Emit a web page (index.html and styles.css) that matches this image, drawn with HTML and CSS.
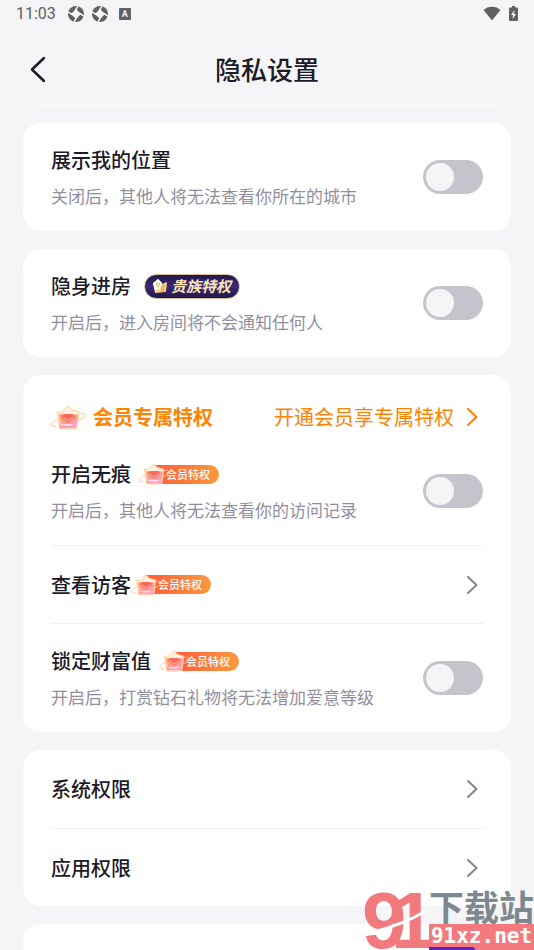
FILE: index.html
```html
<!DOCTYPE html>
<html lang="zh-CN">
<head>
  <meta charset="UTF-8" />
  <meta name="viewport" content="width=device-width, initial-scale=1.0" />
  <title>隐私设置</title>
  <link rel="stylesheet" href="styles.css">
</head>
<body>
  <!-- shared icons -->
  <svg class="sprite" aria-hidden="true">
    <defs>
      <linearGradient id="gemFill" x1="0" y1="0" x2="1" y2="1">
        <stop offset="0" stop-color="#ffa566" />
        <stop offset="0.5" stop-color="#ff9a90" />
        <stop offset="1" stop-color="#ff9fe0" />
      </linearGradient>
      <linearGradient id="goldFill" x1="0" y1="0" x2="1" y2="1">
        <stop offset="0" stop-color="#fff8e4" />
        <stop offset="1" stop-color="#f3bd55" />
      </linearGradient>
    </defs>
    <symbol id="icon-arrow" viewBox="0 0 22 22">
      <path d="M7 3l8.500 8L7 19" fill="none" stroke="currentColor" stroke-width="2" stroke-linecap="round" stroke-linejoin="round" />
    </symbol>
    <symbol id="icon-shutter" viewBox="0 0 16 16">
      <circle cx="8" cy="8" r="8" fill="#606060" />
      <path d="M8 3l5 5-5 5-5-5z" fill="#f5f5f8" />
      <path d="M0 6l5 3M6 16l3-5M16 10l-5-3M10 0L7 5" stroke="#f5f5f8" stroke-width="1.500" />
    </symbol>
    <symbol id="icon-gem" viewBox="0 0 35 25">
      <path d="M7 14C2 16 0 19 1 21q1 1 4 0M27 9c4-1 7-1 7 1 0 2-3 4-7 6" fill="none" stroke="#ffc996" stroke-width="1" />
      <path d="M6 7l5 0 6-6 4 4 7 2-2 16-4 1H9z" fill="#fff1dd" stroke="#ffcf95" stroke-width="1" />
      <path d="M7 10l3-1h13l4 1-2 13H9z" fill="url(#gemFill)" />
      <path d="M10 12l3-3h8l3 3-7 6z" fill="#f9685c" />
      <path d="M12 12l5 4 5-4" fill="none" stroke="#ffc2ac" stroke-width="1" />
      <path d="M7 10l3 10h13" fill="none" stroke="#ffe4d8" stroke-width="1" />
      <path d="M12 20h8" stroke="#ffd9ee" stroke-width="2" />
    </symbol>
  </svg>

  <div class="status-bar">
    <span class="time">11:03</span>
    <svg class="status-icon" viewBox="0 0 16 16" aria-hidden="true"><use href="#icon-shutter" /></svg>
    <svg class="status-icon" viewBox="0 0 16 16" aria-hidden="true"><use href="#icon-shutter" /></svg>
    <span class="input-mark">A</span>
    <svg class="wifi" viewBox="0 0 18 15" aria-hidden="true">
      <path d="M0.500 4C5-.5 13-.5 17.500 4L9 14.500z" fill="#606060" />
    </svg>
    <svg class="battery" viewBox="0 0 9 15" aria-hidden="true">
      <path d="M3 0h3v1.500h2q1 0 1 1V14q0 1-1 1H1q-1 0-1-1V2.500q0-1 1-1h2z" fill="#606060" />
      <path d="M5.500 4L2 9h2l-.5 4L7 8H5z" fill="#f5f5f8" />
    </svg>
  </div>

  <header class="nav">
    <button type="button" class="back" aria-label="返回">
      <svg viewBox="0 0 18 28" aria-hidden="true">
        <path d="M15 3L3 14.500 15 26" fill="none" stroke="currentColor" stroke-width="2.500" stroke-linecap="round" stroke-linejoin="round" />
      </svg>
    </button>
    <h1>隐私设置</h1>
  </header>

  <main>
    <section class="card">
      <div class="row">
        <div class="info">
          <label class="name" for="location">展示我的位置</label>
          <p>关闭后，其他人将无法查看你所在的城市</p>
        </div>
        <input type="checkbox" class="switch" id="location" />
      </div>
    </section>

    <section class="card">
      <div class="row">
        <div class="info">
          <div class="title">
            <label class="name" for="stealth">隐身进房</label>
            <span class="noble">
              <svg viewBox="0 0 16 16" aria-hidden="true">
                <path d="M1 5l2-1 3-3 3 3 1 2 5-2-1 10-11 1z" fill="url(#goldFill)" />
                <path d="M1 5l5-4 4 4-2 6-5 1z" fill="#fff" />
                <path d="M4 6l2-1 2 1-2 3zM10 7v7M12 6l-1 8" fill="none" stroke="#e5a84d" stroke-width="1" />
              </svg>
              贵族特权
            </span>
          </div>
          <p>开启后，进入房间将不会通知任何人</p>
        </div>
        <input type="checkbox" class="switch" id="stealth" />
      </div>
    </section>

    <section class="card">
      <div class="vip-head">
        <svg class="gem" viewBox="0 0 35 25" aria-hidden="true"><use href="#icon-gem" /></svg>
        <h2>会员专属特权</h2>
        <a href="#vip">开通会员享专属特权<svg class="arrow" aria-hidden="true"><use href="#icon-arrow" /></svg></a>
      </div>
      <div class="row">
        <div class="info">
          <div class="title">
            <label class="name" for="traceless">开启无痕</label>
            <span class="vip"><svg viewBox="0 0 35 25" aria-hidden="true"><use href="#icon-gem" /></svg><b>会员特权</b></span>
          </div>
          <p>开启后，其他人将无法查看你的访问记录</p>
        </div>
        <input type="checkbox" class="switch" id="traceless" />
      </div>
      <a class="row link" href="#visitors">
        <span class="title tight">
          <span class="name">查看访客</span>
          <span class="vip"><svg viewBox="0 0 35 25" aria-hidden="true"><use href="#icon-gem" /></svg><b>会员特权</b></span>
        </span>
        <svg class="arrow" aria-hidden="true"><use href="#icon-arrow" /></svg>
      </a>
      <div class="row">
        <div class="info">
          <div class="title">
            <label class="name" for="wealth">锁定财富值</label>
            <span class="vip"><svg viewBox="0 0 35 25" aria-hidden="true"><use href="#icon-gem" /></svg><b>会员特权</b></span>
          </div>
          <p>开启后，打赏钻石礼物将无法增加爱意等级</p>
        </div>
        <input type="checkbox" class="switch" id="wealth" />
      </div>
    </section>

    <section class="card">
      <a class="row link" href="#system">
        <span class="name">系统权限</span>
        <svg class="arrow" aria-hidden="true"><use href="#icon-arrow" /></svg>
      </a>
      <a class="row link" href="#app">
        <span class="name">应用权限</span>
        <svg class="arrow" aria-hidden="true"><use href="#icon-arrow" /></svg>
      </a>
    </section>

    <section class="card next"></section>
  </main>

  <div class="watermark">
    <svg class="mark" viewBox="0 0 62 60" aria-hidden="true">
      <text x="-2" y="58">9</text>
      <text x="27" y="58">1</text>
      <path d="M6 43Q38 35 62 21" />
    </svg>
    <div class="site">
      <span class="site-name">下载站</span>
      <span class="site-url">91xz.net</span>
    </div>
    <i class="tab"></i>
  </div>
</body>
</html>
```

FILE: styles.css
```css
* {
  box-sizing: border-box;
}
body {
  margin: 0;
  height: 100vh;
  overflow: hidden;
  position: relative;
  display: flex;
  flex-direction: column;
  background: #f5f5f8;
  color: #1d1b28;
  font-family: "Noto Sans CJK SC", sans-serif;
}
h1, h2, p {
  margin: 0;
}
a {
  color: inherit;
  text-decoration: none;
}
.sprite {
  position: absolute;
  width: 0;
  height: 0;
}

/* status bar */
.status-bar {
  display: flex;
  align-items: center;
  flex: none;
  gap: 8px;
  height: 27px;
  padding: 0 16px;
  color: #606060;
}
.time {
  margin-right: 4px;
  font: 16px/20px Roboto, sans-serif;
}
.status-icon {
  width: 16px;
  height: 16px;
}
.input-mark {
  width: 12px;
  height: 12px;
  margin-left: 3px;
  border-radius: 1px;
  background: #606060;
  color: #f5f5f8;
  font: bold 9px/12px Roboto, sans-serif;
  text-align: center;
}
.wifi {
  width: 18px;
  height: 15px;
  margin-left: auto;
}
.battery {
  width: 9px;
  height: 15px;
}

/* nav */
.nav {
  display: grid;
  grid-template-columns: 40px 1fr 40px;
  align-items: center;
  flex: none;
  height: 79px;
  margin: 0 37px 17px;
  padding-top: 6px;
  border-bottom: 1px solid #fcfcfd;
}
.nav h1 {
  font-size: 26px;
  font-weight: 500;
  line-height: 38px;
  text-align: center;
}
.back {
  height: 40px;
  margin-left: -8px;
  padding: 0;
  border: 0;
  background: none;
  color: inherit;
}
.back svg {
  display: block;
  width: 18px;
  height: 28px;
}

/* cards */
main {
  display: flex;
  flex-direction: column;
  flex: 1;
  gap: 18px;
  min-height: 0;
  padding: 0 23px;
}
.card {
  flex: none;
  padding: 0 28px;
  border-radius: 18px;
  background: #fff;
}
.next {
  flex: 1;
  border-radius: 18px 18px 0 0;
}
.row {
  display: flex;
  align-items: center;
  justify-content: space-between;
  padding: 22px 0;
}
.row + .row {
  border-top: 1px solid #efeff2;
}
.link {
  min-height: 78px;
  padding: 0;
}
.title {
  display: flex;
  align-items: center;
  gap: 8px;
}
.tight {
  gap: 0;
}
.name {
  display: block;
  font-size: 20px;
  font-weight: 500;
  line-height: 30px;
}
.row p {
  margin: 9px 0 1px;
  color: #918f9f;
  font-size: 17px;
  line-height: 24px;
}
.arrow {
  flex: none;
  width: 22px;
  height: 22px;
  color: #858391;
}
.switch {
  appearance: none;
  flex: none;
  width: 60px;
  height: 34px;
  margin: 0;
  padding: 3px;
  border-radius: 17px;
  background: #c5c3cc;
}
.switch::before {
  content: "";
  display: block;
  width: 28px;
  height: 28px;
  border-radius: 50%;
  background: #f5f5f8;
}
.switch:checked {
  background: #ff8200;
}
.switch:checked::before {
  margin-left: auto;
}

/* member block */
.vip-head {
  display: flex;
  align-items: center;
  gap: 7px;
  padding: 24px 0 2px;
  color: #ff8200;
  font-size: 20px;
  line-height: 36px;
}
.vip-head h2 {
  font-size: 20px;
  font-weight: 700;
}
.vip-head a {
  display: flex;
  align-items: center;
  gap: 7px;
  margin-left: auto;
}
.vip-head .arrow {
  color: inherit;
}
.gem {
  width: 35px;
  height: 25px;
}
.vip {
  display: flex;
  align-items: center;
}
.vip svg {
  position: relative;
  width: 31px;
  height: 22px;
  margin-right: -18px;
}
.vip b {
  height: 19px;
  padding: 0 9px 0 14px;
  border-radius: 3px 10px 10px 3px;
  background: linear-gradient(90deg, #ff5a38, #fa9a3e);
  color: #fff;
  font-size: 11px;
  font-weight: 500;
  line-height: 18px;
}
.noble {
  display: flex;
  align-items: center;
  gap: 3px;
  height: 25px;
  margin-left: 5px;
  padding: 0 8px 0 7px;
  border: 1px solid #d9bd9c;
  border-radius: 13px;
  background: linear-gradient(180deg, #1f1748, #3a2a78 50%, #1f1748);
  color: #ffe5b5;
  font-size: 15px;
  font-style: italic;
  font-weight: 700;
  line-height: 22px;
}
.noble svg {
  width: 16px;
  height: 16px;
}

/* site watermark lies over the page corner */
.watermark {
  position: absolute;
  right: 0;
  bottom: 0;
  display: flex;
  gap: 3px;
}
.mark {
  width: 62px;
  height: 60px;
  overflow: visible;
  fill: #f27a7e;
  font: bold 80px "Liberation Sans Narrow", "Liberation Sans", sans-serif;
}
.mark path {
  fill: none;
  stroke: #fff;
  stroke-width: 3;
}
.site {
  display: flex;
  flex-direction: column;
  width: 105px;
}
.site-name {
  color: #7d8890;
  font-size: 35px;
  font-weight: 700;
  line-height: 32px;
}
.site-url {
  height: 26px;
  margin-top: 2px;
  background: #f27a7e;
  color: #fff;
  font: bold 21px/24px "DejaVu Sans Mono", monospace;
  text-align: center;
}
.tab {
  position: absolute;
  left: 65px;
  bottom: 0;
  width: 46px;
  height: 3px;
  border-radius: 0 8px 0 0;
  background: #5c20c4;
}
```
